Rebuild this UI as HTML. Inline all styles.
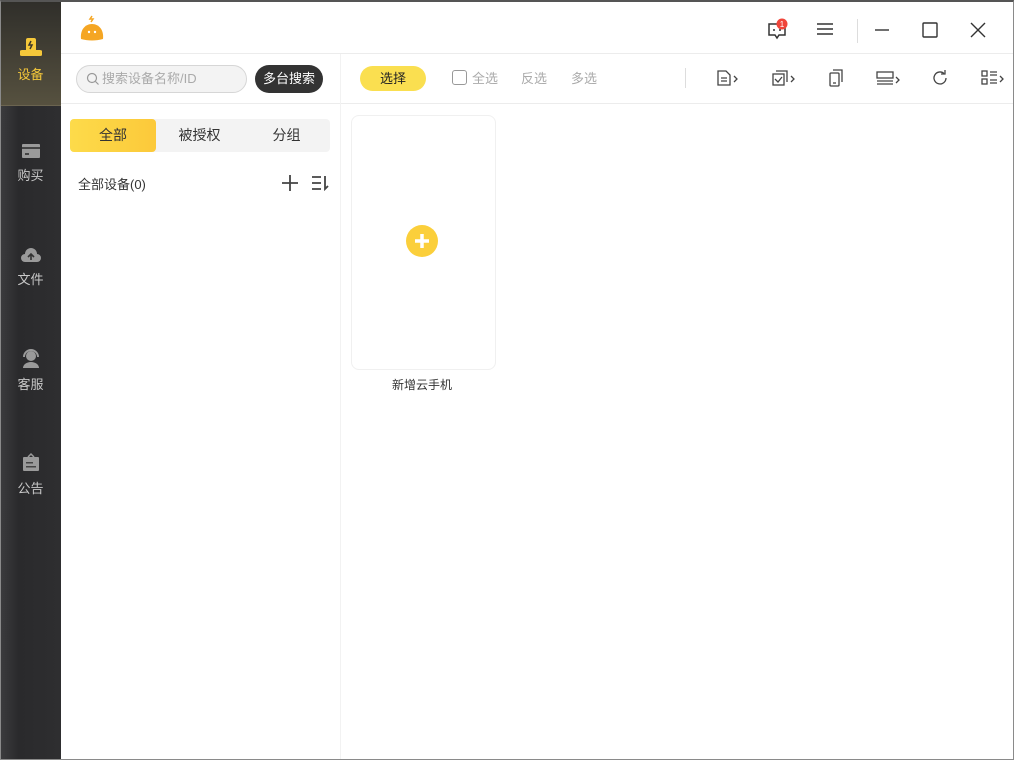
<!DOCTYPE html>
<html><head><meta charset="utf-8"><style>
*{margin:0;padding:0;box-sizing:border-box}
body{width:1014px;height:760px;overflow:hidden;background:#fff;font-family:"Liberation Sans","Noto Sans CJK SC",sans-serif;position:relative;font-size:13px;color:#333}
.frame{position:absolute;inset:0;border:1px solid #8a8a8a;border-top:2px solid #555;pointer-events:none;z-index:9}
.side{position:absolute;left:0;top:0;width:61px;height:760px;background:linear-gradient(90deg,#3c3c3e,#2a2a2c 30%,#2e2e30)}
.act{position:absolute;left:0;top:0;width:61px;height:106px;background:linear-gradient(180deg,#2f2e2a,#56513f);border-bottom:1px solid #6b6450}
.nav{position:absolute;left:0;width:61px;text-align:center;color:#c8c8c8;font-size:13px}
.nav svg{display:block;margin:0 auto 6px}
.abs{position:absolute}
.line{position:absolute;background:#ececec}
</style></head><body>
<div class="side"></div><div class="act"></div>
<div class="nav" style="top:36px;color:#f5c83a"><svg width="22" height="22" viewBox="0 0 22 22"><path d="M2 14h18a2 2 0 0 1 0 6H2a2 2 0 0 1 0-6z" fill="#f5c83a"/><rect x="6" y="2" width="10" height="14" rx="2" fill="#f5c83a"/><path d="M11 5l-2 4h3l-2 4" stroke="#3a352a" stroke-width="1.5" fill="none"/></svg>设备</div>
<div class="nav" style="top:143px"><svg width="20" height="16" viewBox="0 0 20 16"><rect x="1" y="1" width="18" height="14" rx="1" fill="#9a9a9a"/><rect x="1" y="4" width="18" height="2" fill="#444"/><rect x="4" y="10" width="4" height="2" fill="#444"/></svg>购买</div>
<div class="nav" style="top:247px"><svg width="22" height="16" viewBox="0 0 22 16"><path d="M5 15a4 4 0 0 1 0-8 6 6 0 0 1 12 0 4 4 0 0 1 0 8z" fill="#9a9a9a"/><path d="M11 13V7M8 10l3-3 3 3" stroke="#333" stroke-width="1.6" fill="none"/></svg>文件</div>
<div class="nav" style="top:348px"><svg width="22" height="20" viewBox="0 0 22 20"><circle cx="11" cy="8" r="5" fill="#9a9a9a"/><path d="M4 9a7 7 0 0 1 14 0" stroke="#9a9a9a" stroke-width="2" fill="none"/><path d="M3 20a8 6 0 0 1 16 0z" fill="#9a9a9a"/></svg>客服</div>
<div class="nav" style="top:452px"><svg width="20" height="20" viewBox="0 0 20 20"><rect x="2" y="5" width="16" height="14" rx="1" fill="#9a9a9a"/><path d="M7 5l3-3 3 3" stroke="#9a9a9a" stroke-width="1.5" fill="none"/><rect x="5" y="10" width="7" height="1.5" fill="#444"/><rect x="5" y="14" width="10" height="1.5" fill="#444"/></svg>公告</div>

<!-- logo -->
<svg class="abs" style="left:79px;top:14px" width="26" height="28" viewBox="0 0 26 28"><path d="M13 2l-2 3h3l-2 3" stroke="#f5a623" stroke-width="1.5" fill="none"/><path d="M2 25c-1-9 4-15 11-15s12 6 11 15c-7 2-15 2-22 0z" fill="#f5a623"/><circle cx="10" cy="18" r="1.2" fill="#fff"/><circle cx="16" cy="18" r="1.2" fill="#fff"/></svg>
<div class="line" style="left:61px;top:53px;width:953px;height:1px"></div>
<div class="line" style="left:61px;top:103px;width:953px;height:1px"></div>
<div class="line" style="left:340px;top:54px;width:1px;height:706px;background:#f2f2f2"></div>

<!-- titlebar icons -->
<svg class="abs" style="left:766px;top:18px" width="24" height="22" viewBox="0 0 24 22"><path d="M3 6h16v11h-6l-2 3-2-3H3z" stroke="#333" stroke-width="1.5" fill="none"/><circle cx="8" cy="12" r="1" fill="#333"/><circle cx="14" cy="12" r="1" fill="#333"/><circle cx="16" cy="6" r="5.5" fill="#f0453a"/><text x="16" y="9" font-size="8" fill="#fff" text-anchor="middle" font-family="Liberation Sans">1</text></svg>
<svg class="abs" style="left:816px;top:22px" width="18" height="14"><path d="M1 2h16M1 7h16M1 12h16" stroke="#333" stroke-width="1.6"/></svg>
<div class="abs" style="left:857px;top:19px;width:1px;height:24px;background:#ddd"></div>
<svg class="abs" style="left:874px;top:22px" width="16" height="16"><path d="M1 8h14" stroke="#333" stroke-width="1.4"/></svg>
<svg class="abs" style="left:922px;top:22px" width="16" height="16"><rect x="1" y="1" width="14" height="14" rx="1" stroke="#333" stroke-width="1.4" fill="none"/></svg>
<svg class="abs" style="left:970px;top:22px" width="16" height="16"><path d="M1 1l14 14M15 1L1 15" stroke="#333" stroke-width="1.4"/></svg>

<!-- search -->
<div class="abs" style="left:76px;top:65px;width:171px;height:28px;border:1px solid #d6d6d6;border-radius:14px;background:#f3f3f3;color:#aaa;font-size:13px;line-height:26px;padding-left:25px">搜索设备名称/ID</div>
<svg class="abs" style="left:86px;top:72px" width="14" height="14"><circle cx="6" cy="6" r="4.5" stroke="#999" stroke-width="1.2" fill="none"/><path d="M9.5 9.5l3 3" stroke="#999" stroke-width="1.2"/></svg>
<div class="abs" style="left:255px;top:65px;width:68px;height:28px;border-radius:14px;background:#333;color:#fff;font-size:13px;line-height:28px;text-align:center">多台搜索</div>

<!-- tabs -->
<div class="abs" style="left:70px;top:119px;width:260px;height:33px;background:#f3f3f3;border-radius:4px"></div>
<div class="abs" style="left:70px;top:119px;width:86px;height:33px;background:linear-gradient(90deg,#fddb4a,#fcc93a);border-radius:4px;line-height:33px;text-align:center;font-size:14px">全部</div>
<div class="abs" style="left:156px;top:119px;width:87px;line-height:33px;text-align:center;font-size:14px">被授权</div>
<div class="abs" style="left:243px;top:119px;width:87px;line-height:33px;text-align:center;font-size:14px">分组</div>
<div class="abs" style="left:78px;top:174px;font-size:13px">全部设备(0)</div>
<svg class="abs" style="left:281px;top:174px" width="18" height="18"><path d="M9 1v16M1 9h16" stroke="#444" stroke-width="1.8"/></svg>
<svg class="abs" style="left:311px;top:175px" width="18" height="16"><path d="M1 2h9M1 8h9M1 14h9M14 1v13l3-3" stroke="#444" stroke-width="1.8" fill="none"/></svg>

<!-- toolbar -->
<div class="abs" style="left:360px;top:66px;width:66px;height:25px;border-radius:13px;background:#fadf50;text-align:center;line-height:25px;font-size:13px;color:#222">选择</div>
<div class="abs" style="left:452px;top:70px;width:15px;height:15px;border:1px solid #999;border-radius:3px"></div>
<div class="abs" style="left:472px;top:68px;color:#aaa;font-size:13px">全选</div>
<div class="abs" style="left:521px;top:68px;color:#aaa;font-size:13px">反选</div>
<div class="abs" style="left:571px;top:68px;color:#aaa;font-size:13px">多选</div>
<div class="abs" style="left:685px;top:68px;width:1px;height:20px;background:#ddd"></div>
<svg class="abs" style="left:716px;top:69px;stroke:#444;fill:none;stroke-width:1.3" width="24" height="18"><path d="M2 2h8l4 4v10H2z"/><path d="M5 9h6M5 12h6"/><path d="M18 7l3 3-3 3"/></svg>
<svg class="abs" style="left:771px;top:69px;stroke:#444;fill:none;stroke-width:1.3" width="26" height="18"><rect x="2" y="5" width="11" height="11"/><path d="M5 2h11v11"/><path d="M4 10l3 3 4-5"/><path d="M20 7l3 3-3 3"/></svg>
<svg class="abs" style="left:828px;top:69px;stroke:#444;fill:none;stroke-width:1.3" width="18" height="18"><rect x="2" y="4" width="9" height="13" rx="1"/><path d="M5 1h9v12"/><path d="M5 14h3"/></svg>
<svg class="abs" style="left:875px;top:70px;stroke:#444;fill:none;stroke-width:1.3" width="26" height="18"><rect x="2" y="2" width="16" height="6"/><path d="M2 11h16M2 14h16"/><path d="M21 7l3 3-3 3"/></svg>
<svg class="abs" style="left:931px;top:69px;stroke:#444;fill:none;stroke-width:1.3" width="18" height="18"><path d="M15 9a6 6 0 1 1-2-4.5"/><path d="M14 1v4h-4"/></svg>
<svg class="abs" style="left:980px;top:69px;stroke:#444;fill:none;stroke-width:1.3" width="24" height="18"><rect x="2" y="2" width="5" height="5"/><rect x="2" y="10" width="5" height="5"/><path d="M10 3h7M10 6h7M10 11h7M10 14h7"/><path d="M20 7l3 3-3 3"/></svg>

<!-- card -->
<div class="abs" style="left:351px;top:115px;width:145px;height:255px;border:1px solid #f0f0f0;border-radius:8px"></div>
<svg class="abs" style="left:406px;top:225px" width="32" height="32"><circle cx="16" cy="16" r="16" fill="#fbcf3b"/><path d="M16 9v14M9 16h14" stroke="#fff" stroke-width="3.5"/></svg>
<div class="abs" style="left:351px;top:376px;width:142px;text-align:center;font-size:12px;color:#333">新增云手机</div>
<div class="frame"></div>
</body></html>
